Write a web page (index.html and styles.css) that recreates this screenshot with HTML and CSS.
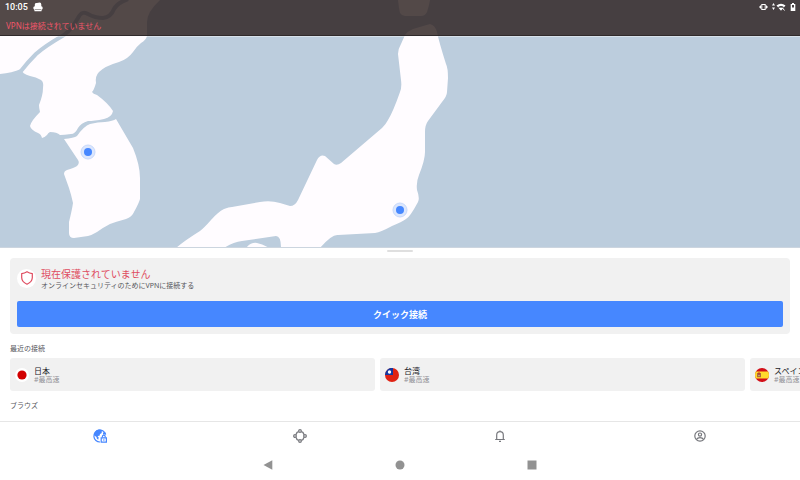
FILE: index.html
```html
<!DOCTYPE html>
<html lang="ja">
<head>
    <meta charset="UTF-8">
    <meta name="viewport" content="width=device-width, initial-scale=1.0">
    <title>VPN</title>
    <link rel="stylesheet" href="styles.css">
</head>
<body>
    <div class="app">
        <div class="map">
            <header class="header">
                <div class="status-bar">
                    <span class="time">10:05</span>
                    <svg class="status-app" width="10" height="10" viewBox="0 0 10 10">
                        <path fill="#fff" d="M1.8 4.2V2.4Q2 .8 3.8 1L6.8 .5Q8.2 .6 8.3 2.4V4.2Q9.7 4.5 9.7 6T8.6 7.6V8.9Q8.4 9.5 7.6 9.3H2.4Q1.4 9.4 1.4 8.8V7.6Q.3 7.2.3 5.8T1.8 4.2Z"/>
                        <path stroke="#4a4243" stroke-dasharray="1 1" d="M2.5 7.5h5"/>
                    </svg>
                    <div class="status-icons">
                        <svg width="9" height="8" viewBox="0 0 9 8" fill="none" stroke="#fff">
                            <rect x="2.8" y="1.5" width="3.4" height="5"/>
                            <path d="M1.5 2.5v3M7.5 2.5v3M.5 3.5v1M8.5 3.5v1"/>
                        </svg>
                        <svg width="14" height="8" viewBox="0 0 14 8">
                            <path fill="#fff" d="M1.5 0 3 2.5H0ZM0 4.5h3L1.5 7ZM4.5 2.5Q9-1.2 13.5 2.5L9 7.8Z"/>
                            <path stroke="#4a4243" stroke-width=".6" d="M6 4.5Q9 2 12 4.5"/>
                            <path stroke="#fff" d="m10.5 5 2 2.5"/>
                        </svg>
                        <svg width="6" height="8" viewBox="0 0 6 8">
                            <path fill="#fff" d="M2 0h2v1h1.3v7H.7V1H2Z"/>
                            <path fill="#4a4243" d="M2 2h2v2.5H2Z"/>
                        </svg>
                    </div>
                </div>
                <p class="header-state">VPNは接続されていません</p>
            </header>
            <svg class="map-canvas" viewBox="0 0 800 248" preserveAspectRatio="xMidYMin slice">
                <g class="land">
                    <!-- mainland and the north of the peninsula -->
                    <path d="M0 0H160Q147 12 147 22V36Q146 40 141 43Q136 47 133 52Q128 59 119 62Q105 66 99 72Q95 76 96 83Q94 90 92 92Q93 94 97 95Q108 103 113 111Q112 117 104 119Q94 121 88 121Q81 123 78 128Q75 134 71 134Q64 135 60 135Q57 132 50 132Q48 133 47 135Q44 138 42 138Q41 134 38 133Q31 130 30 126Q31 121 40 112Q39 108 39 105Q43 95 43 88Q44 82 41 80Q36 77 30 76Q22 74 21 69Q12 73 0 74Z"/>
                    <path d="M116 119L133 148Q140 165 140 178V199Q139 203 134 212Q132 217 126 219Q115 222 110 224Q104 227 97 232Q92 235 88 236L74 238Q69 238 69 233V222Q72 210 73 203Q71 194 69 188L64 174Q64 171 67 170Q74 168 77 166Q80 163 78 160L64 139Q74 138 77 136Q84 126 90 124Q98 122 105 122Q113 121 116 119Z"/>
                    <path d="M398 0Q399 9 400 13Q402 16 405 16H421Q425 16 427 12Q429 6 430 0Z"/>
                    <path d="M176 248Q184 241 200 231Q204 228 211 220Q218 212 224 209Q229 207 232 207L260 202Q270 200 280 203L290 206Q295 206 298 200L317 160Q320 154 325 156L334 164Q337 166 341 163L382 128Q386 124 388 120Q393 112 400 92Q402 87 401 80L398 54Q398 49 401 44L405 35Q408 31 413 29L430 24Q435 25 437 32Q439 42 446 64Q448 68 448 78L447 92Q447 96 442 102L428 121Q425 125 425 132V152Q425 160 419 175Q416 182 417 190Q420 198 418 202Q410 217 406 219Q402 222 392 226Q381 232 375 233L338 235Q332 234 320 248Z"/>
                </g>
                <path class="river" d="M21 71Q28 62 36 54Q45 46 64 35Q72 29 78 18Q82 10 88 14Q95 18 103 18Q111 17 114 9Q117 3 128-1"/>
                <path class="sea" d="M224 248Q233 242 242 241L276 236Q281 236 281 248Z"/>
                <path class="land" d="M246 248Q251 242 257 243Q263 244 269 248Z"/>
                <g class="pin">
                    <circle cx="88" cy="152" r="7"/>
                    <circle class="pin-dot" cx="88" cy="152" r="4"/>
                    <circle cx="400" cy="210" r="7"/>
                    <circle class="pin-dot" cx="400" cy="210" r="4"/>
                </g>
            </svg>
        </div>

        <main class="sheet">
            <div class="handle"></div>
            <section class="status-card">
                <div class="status-info">
                    <span class="shield">
                        <svg width="12" height="14" viewBox="0 0 12 14" fill="none" stroke="#df4b5f" stroke-width="1.2">
                            <path d="M6 .8Q8.5 2.2 11.3 2.7V6.8Q11.1 11 6 13.2Q.9 11 .7 6.8V2.7Q3.5 2.2 6 .8Z"/>
                        </svg>
                    </span>
                    <div>
                        <h1>現在保護されていません</h1>
                        <p>オンラインセキュリティのためにVPNに接続する</p>
                    </div>
                </div>
                <button type="button" class="connect">クイック接続</button>
            </section>

            <h2>最近の接続</h2>
            <div class="recent">
                <button type="button" class="recent-card">
                    <svg width="14" height="14" viewBox="0 0 14 14">
                        <circle cx="7" cy="7" r="7" fill="#fff"/>
                        <circle cx="7" cy="7" r="4.6" fill="#d20000"/>
                    </svg>
                    <span class="place"><b>日本</b><small>#最高速</small></span>
                </button>
                <button type="button" class="recent-card">
                    <svg width="14" height="14" viewBox="0 0 14 14">
                        <circle cx="7" cy="7" r="7" fill="#e02213"/>
                        <path fill="#1537a0" d="M8 7H0A7 7 0 0 1 8 0Z"/>
                        <circle cx="4.5" cy="4" r="1.7" fill="#fff"/>
                    </svg>
                    <span class="place"><b>台湾</b><small>#最高速</small></span>
                </button>
                <button type="button" class="recent-card">
                    <svg width="14" height="14" viewBox="0 0 14 14">
                        <circle cx="7" cy="7" r="7" fill="#d20f18"/>
                        <path fill="#ffda2c" d="M.9 3.5H13.1Q14.9 7 13.1 10.5H.9Q-.9 7 .9 3.5Z"/>
                        <path fill="#ad6b3c" d="M2 5h4v4.2H2Z"/>
                        <path fill="#b5452c" d="M3 4.5h2v2H3Z"/>
                        <path fill="#ddc8b0" d="M3.5 7h1v1h-1Z"/>
                    </svg>
                    <span class="place"><b>スペイン</b><small>#最高速</small></span>
                </button>
            </div>
            <h2>ブラウズ</h2>
        </main>

        <nav class="tabs">
            <a href="#" class="active" aria-label="VPN">
                <svg width="14" height="14" viewBox="0 0 14 14" fill="none" stroke="currentColor" stroke-width="1.2">
                    <path d="M12.7 5.5A6 6 0 1 0 7 13"/>
                    <path fill="currentColor" stroke="none" d="M1 5Q3 .5 7 .6L10 1.4 8.5 2.7 8.8 4 7 5 6.5 6.8 4.5 7 5.7 8.6 5.2 10.8 3.8 9.5 3.5 8 1 6.3ZM10 3.5 12 3 12.8 5.6H10Z"/>
                    <path fill="#fff" d="M8.2 8.8h5.2v4.4H8.2Z"/>
                    <path d="M9.4 8.5V7.5a1.4 1.4 0 0 1 2.8 0v1M10 11h1.6"/>
                </svg>
            </a>
            <a href="#" aria-label="Meshnet">
                <svg width="14" height="14" viewBox="0 0 14 14" fill="none" stroke="currentColor" stroke-width="1.3">
                    <circle cx="7" cy="2" r="1.3"/>
                    <circle cx="12" cy="7" r="1.3"/>
                    <circle cx="7" cy="12" r="1.3"/>
                    <circle cx="2" cy="7" r="1.3"/>
                    <path d="M5.7 2.7 4 3.4Q3.7 4.8 2.7 5.7M8.3 2.7 10 3.4Q10.3 4.8 11.3 5.7M5.7 11.3 4 10.6Q3.7 9.2 2.7 8.3M8.3 11.3 10 10.6Q10.3 9.2 11.3 8.3"/>
                </svg>
            </a>
            <a href="#" aria-label="通知">
                <svg width="12" height="12" viewBox="0 0 12 12" fill="none" stroke="currentColor" stroke-width="1.2">
                    <path d="M1.2 9.5h9.6M2.7 9.5V5Q2.7 1.7 6 1.7T9.3 5V9.5M6 .4V2M5 11.3h2"/>
                </svg>
            </a>
            <a href="#" aria-label="プロフィール">
                <svg width="12" height="12" viewBox="0 0 12 12" fill="none" stroke="currentColor" stroke-width="1.2">
                    <circle cx="6" cy="6" r="5.2"/>
                    <circle cx="6" cy="4.6" r="1.6"/>
                    <path d="M2.4 9.5Q3.5 7.7 6 7.7T9.6 9.5"/>
                </svg>
            </a>
        </nav>

        <div class="system-nav">
            <button type="button" aria-label="戻る">
                <svg width="10" height="10" viewBox="0 0 10 10"><path d="M.5 5 9.3.3V9.7Z"/></svg>
            </button>
            <button type="button" aria-label="ホーム">
                <svg width="10" height="10" viewBox="0 0 10 10"><circle cx="5" cy="5" r="4.5"/></svg>
            </button>
            <button type="button" aria-label="アプリ履歴">
                <svg width="10" height="10" viewBox="0 0 10 10"><path d="M.5.5h9v9h-9Z"/></svg>
            </button>
        </div>
    </div>
</body>
</html>
```

FILE: styles.css
```css
* {
    box-sizing: border-box;
}
body {
    margin: 0;
    font-family: "Noto Sans", "Noto Sans CJK JP", sans-serif;
    font-size: 7px;
    line-height: 10px;
    color: #55565b;
    background-color: #fff;
}
h1, h2, p {
    margin: 0;
    font-weight: normal;
}
svg {
    display: block;
}
button {
    padding: 0;
    border: none;
    font-family: inherit;
    cursor: pointer;
}
.app {
    display: flex;
    flex-direction: column;
    min-height: 100vh;
}

/* map */
.map {
    position: relative;
    flex: 1 0 160px;
    display: flex;
    overflow: hidden;
    background-color: #bccddd;
    border-bottom: 1px solid #ccd5df;
}
.map-canvas {
    flex: 1;
    width: 100%;
    height: auto;
    min-height: 0;
}
.land {
    fill: #fffcff;
}
.sea {
    fill: #bccddd;
}
.river {
    fill: none;
    stroke: #bccddd;
    stroke-width: 4px;
}
.pin {
    fill: #dbe6fd;
    stroke: #c8d9fb;
}
.pin-dot {
    fill: #4687ff;
    stroke: none;
}

/* header over the map */
.header {
    position: absolute;
    top: 0;
    left: 0;
    right: 0;
    height: 36px;
    padding: 2px 4px 0 5px;
    background-color: rgba(40, 27, 26, 0.8);
    border-bottom: 1px solid #302a2b;
    box-shadow: 0 1px 0 rgba(255, 255, 255, 0.4);
}
.status-bar {
    display: flex;
    align-items: center;
    height: 10px;
    color: #fff;
}
.time {
    font-family: Roboto, sans-serif;
    font-size: 9px;
    font-weight: 500;
}
.status-app {
    margin-left: 5px;
}
.status-icons {
    display: flex;
    gap: 4px;
    margin-left: auto;
}
.header-state {
    margin-top: 9px;
    padding-left: 1px;
    font-size: 8px;
    color: #f0566a;
}

/* bottom sheet */
.sheet {
    padding: 2px 10px 6px;
    overflow: hidden;
}
.handle {
    width: 26px;
    height: 2px;
    margin: 0 auto 6px;
    border-radius: 1px;
    background-color: #dfdfdf;
}
.status-card {
    padding: 7px;
    border-radius: 4px;
    background-color: #f1f1f1;
}
.status-info {
    display: flex;
    align-items: center;
    gap: 5px;
    margin-bottom: 10px;
}
.status-info h1 {
    font-size: 10px;
    line-height: 18px;
    color: #df4b5f;
    margin-bottom: -2px;
}
.shield {
    display: flex;
    align-items: center;
    justify-content: center;
    width: 19px;
    height: 19px;
    border-radius: 50%;
    background-color: #fff;
}
.connect {
    display: block;
    width: 100%;
    height: 26px;
    border-radius: 2px;
    font-size: 9px;
    font-weight: bold;
    color: #fff;
    background-color: #4687ff;
}
h2 {
    margin: 10px 0 4px;
    font-size: 7px;
}
.recent {
    display: flex;
    gap: 5px;
    margin-right: -10px;
    overflow: hidden;
}
.recent-card {
    display: flex;
    align-items: center;
    gap: 5px;
    flex: 0 0 calc((100% - 60px) / 2);
    height: 33px;
    padding: 0 5px;
    border-radius: 3px;
    text-align: left;
    background-color: #f1f1f1;
}
.place b, .place small {
    display: block;
    font-size: 8px;
    line-height: 9px;
    font-weight: normal;
    color: #202025;
}
.place small {
    font-size: 7px;
    color: #929297;
}

/* app tabs */
.tabs {
    display: grid;
    grid-template-columns: repeat(4, 1fr);
    height: 29px;
    border-top: 1px solid #e6e6e6;
}
.tabs a {
    display: flex;
    align-items: center;
    justify-content: center;
    color: #77787d;
}
.tabs .active {
    color: #4687ff;
}

/* android buttons */
.system-nav {
    display: flex;
    justify-content: center;
    gap: 122px;
    height: 30px;
}
.system-nav button {
    background: none;
    fill: #929292;
}
```
